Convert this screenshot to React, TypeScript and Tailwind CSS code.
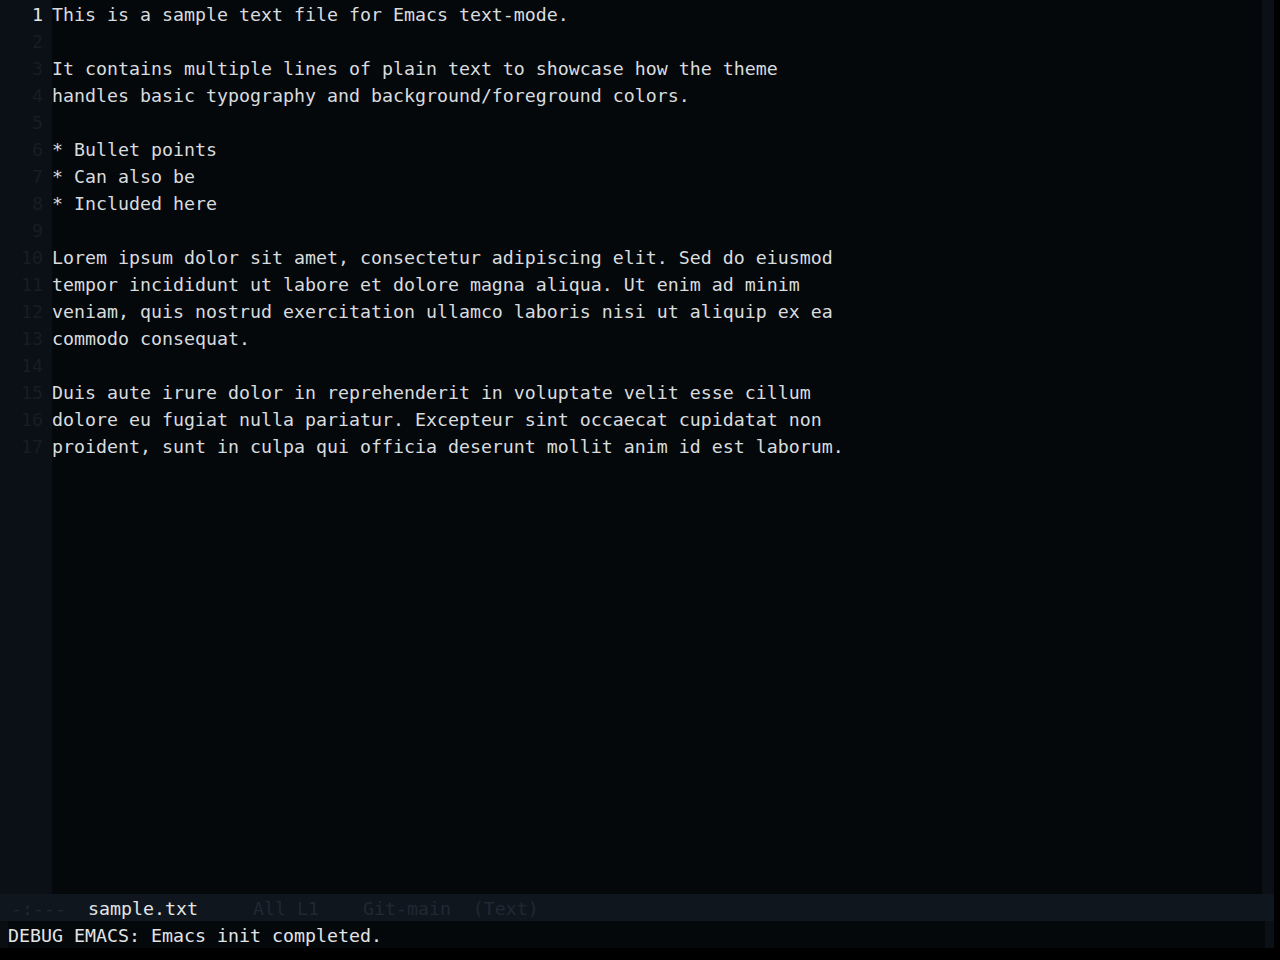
const lines = [
  'This is a sample text file for Emacs text-mode.',
  '',
  'It contains multiple lines of plain text to showcase how the theme',
  'handles basic typography and background/foreground colors.',
  '',
  '* Bullet points',
  '* Can also be',
  '* Included here',
  '',
  'Lorem ipsum dolor sit amet, consectetur adipiscing elit. Sed do eiusmod',
  'tempor incididunt ut labore et dolore magna aliqua. Ut enim ad minim',
  'veniam, quis nostrud exercitation ullamco laboris nisi ut aliquip ex ea',
  'commodo consequat.',
  '',
  'Duis aute irure dolor in reprehenderit in voluptate velit esse cillum',
  'dolore eu fugiat nulla pariatur. Excepteur sint occaecat cupidatat non',
  'proident, sunt in culpa qui officia deserunt mollit anim id est laborum.',
];

const mono = "font-['DejaVu_Sans_Mono',monospace] text-[18.27px] leading-[27px] whitespace-pre";

export default function App() {
  return (
    <div className={`h-[960px] w-[1280px] bg-black overflow-hidden ${mono}`}>
      {/* window */}
      <div className="flex h-[894px] w-[1274px]">
        <div className="w-[52px] bg-[#0b1016] pt-[1px] pr-[9px] text-right">
          {lines.map((_, i) => (
            <div key={i} className={i === 0 ? 'text-[#e2e4e6]' : 'text-[#161d25]'}>
              {i + 1}
            </div>
          ))}
        </div>
        <div className="flex-1 bg-[#05080b] pt-[1px] text-[#d9dcdf]">
          {lines.map((l, i) => (
            <div key={i} className="h-[27px]">{l}</div>
          ))}
        </div>
        <div className="w-[12px] bg-[#0b1016]" />
      </div>

      {/* mode line */}
      <div className="h-[27px] w-[1274px] bg-[#10161d] pl-[11px] pt-[3px] leading-[24px] text-[#1f2934]">
        <span>-:---  </span>
        <span className="text-[#e2e4e6]">sample.txt</span>
        <span>     All L1    Git-main  (Text)</span>
      </div>

      {/* echo area */}
      <div className="flex h-[27px] w-[1274px]">
        <div className="w-[8px] bg-[#0a0e13]" />
        <div className="flex-1 bg-[#05080b] pt-[3px] leading-[24px] text-[#e2e4e6]">DEBUG EMACS: Emacs init completed.</div>
        <div className="w-[9px] bg-[#0b1016]" />
      </div>
    </div>
  );
}
